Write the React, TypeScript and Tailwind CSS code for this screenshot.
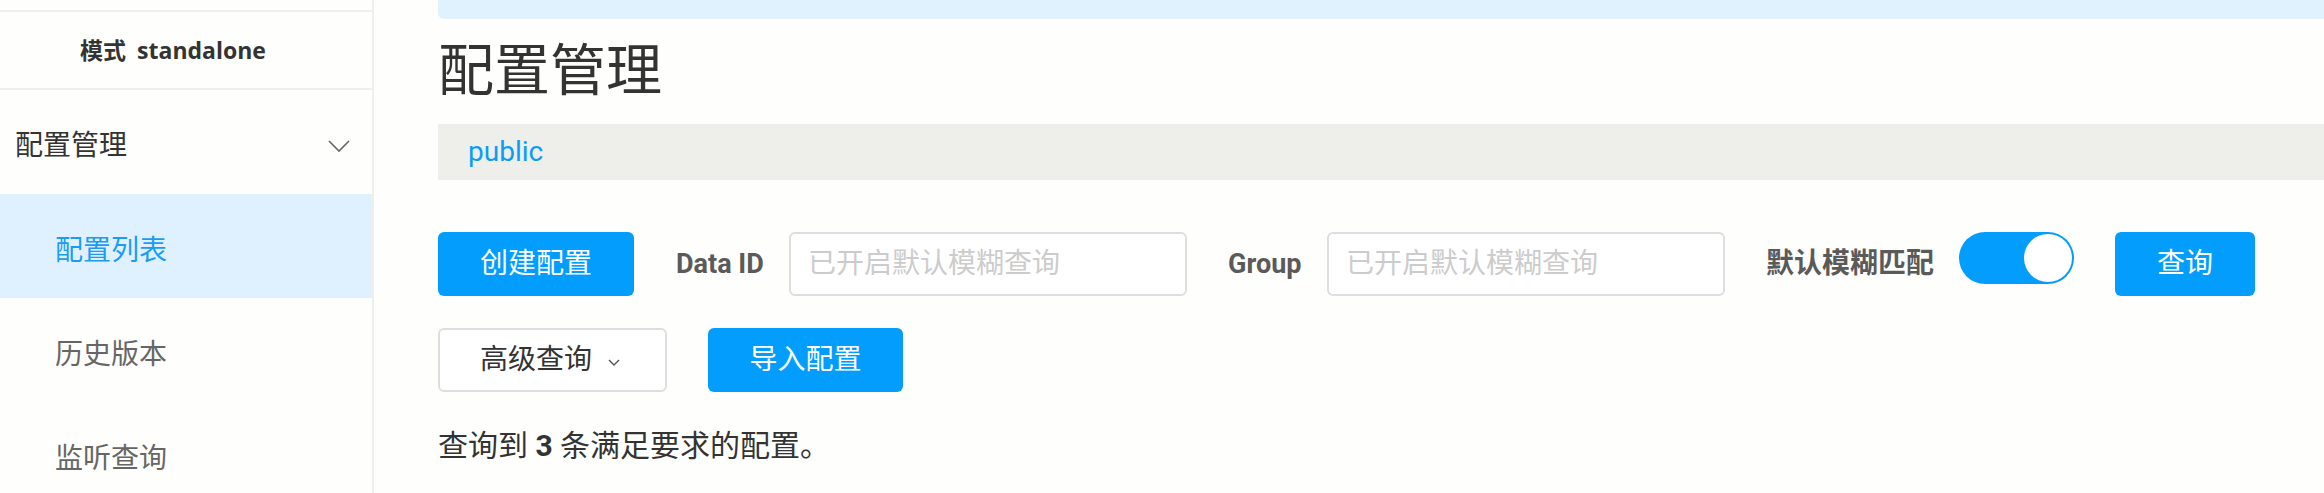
import { ReactNode } from "react";

const cjk = "font-['Roboto','Noto_Sans_CJK_SC',sans-serif]";

function BlueButton({ children, width }: { children: ReactNode; width: string }) {
  return (
    <button className={`${width} h-[64px] rounded-[6px] bg-[#039dfd] text-[28px] leading-none text-white flex items-center justify-center`}>
      {children}
    </button>
  );
}

function SearchField({ label, labelWidth }: { label: string; labelWidth: string }) {
  return (
    <div className="flex items-center mr-[41px]">
      <span className={`${labelWidth} mr-[26px] text-[27px] font-bold leading-none text-[#5a5a5a] whitespace-nowrap`}>{label}</span>
      <div className="w-[398px] h-[64px] rounded-[6px] border-2 border-[#dedede] bg-white flex items-center pl-[17px]">
        <span className="text-[28px] leading-none text-[#cccccc] whitespace-nowrap">已开启默认模糊查询</span>
      </div>
    </div>
  );
}

function Sidebar() {
  return (
    <aside className="w-[374px] shrink-0 border-r-2 border-[#efefed] flex flex-col">
      <div className="h-[12px] shrink-0 border-b-2 border-[#efefed]" />
      <div className="h-[78px] shrink-0 border-b-2 border-[#efefed] flex items-center justify-center pr-[26px] font-['Open_Sans','Noto_Sans_CJK_SC',sans-serif] text-[23px] font-bold text-[#333]">
        <span>模式</span>
        <span className="ml-[11px]">standalone</span>
      </div>
      <div className="h-[104px] shrink-0 flex items-center justify-between pl-[15px] pr-[22px] pt-[8px]">
        <span className="text-[28px] text-[#333]">配置管理</span>
        <svg width="22" height="13" viewBox="0 0 22 13" fill="none">
          <polyline points="1,1 11,11 21,1" stroke="#666" strokeWidth="1.6" />
        </svg>
      </div>
      <div className="h-[104px] shrink-0 flex items-center pl-[55px] pt-[9px] bg-[#dff1fe] text-[28px] text-[#1a9cf5]">配置列表</div>
      <div className="h-[104px] shrink-0 flex items-center pl-[55px] pt-[9px] text-[28px] text-[#666]">历史版本</div>
      <div className="h-[104px] shrink-0 flex items-center pl-[55px] pt-[9px] text-[28px] text-[#666]">监听查询</div>
    </aside>
  );
}

export default function App() {
  return (
    <div className={`h-[493px] w-[2324px] overflow-hidden flex bg-[#fefefc] ${cjk}`}>
      <Sidebar />
      <main className="flex-1 pl-[64px] flex flex-col">
        <div className="h-[19px] shrink-0 bg-[#dff2fe] rounded-bl-[6px]" />
        <div className="h-[105px] shrink-0 flex items-center">
          <h1 className="text-[56px] leading-none text-[#333] -mt-[2px]">配置管理</h1>
        </div>
        <div className="h-[56px] shrink-0 bg-[#eeefeb] flex items-center pl-[30px] text-[28px] text-[#0a9cf7]">public</div>

        <div className="mt-[52px] shrink-0 flex items-start">
          <div className="mr-[42px]">
            <BlueButton width="w-[196px]">创建配置</BlueButton>
          </div>
          <SearchField label="Data ID" labelWidth="w-[87px]" />
          <SearchField label="Group" labelWidth="w-[73px]" />
          <div className="h-[64px] flex items-center mr-[25px]">
            <span className="text-[28px] font-bold leading-none text-[#5a5a5a] whitespace-nowrap">默认模糊匹配</span>
          </div>
          <div className="w-[115px] h-[52px] rounded-full bg-[#039dfd] flex items-center justify-end pr-[2px] mr-[41px]">
            <div className="w-[48px] h-[48px] rounded-full bg-white" />
          </div>
          <BlueButton width="w-[140px]">查询</BlueButton>
        </div>

        <div className="mt-[32px] shrink-0 flex items-center">
          <button className="w-[229px] h-[64px] rounded-[6px] border-2 border-[#dedede] bg-white flex items-center pl-[40px] text-[28px] leading-none text-[#333]">
            <span>高级查询</span>
            <svg className="ml-[16px] mt-[6px]" width="12" height="8" viewBox="0 0 12 8" fill="none">
              <polyline points="1,1 6,6 11,1" stroke="#555" strokeWidth="1.4" />
            </svg>
          </button>
          <div className="ml-[41px]">
            <BlueButton width="w-[195px]">导入配置</BlueButton>
          </div>
        </div>

        <p className="mt-[33px] h-[42px] shrink-0 flex items-center text-[30px] leading-none text-[#333] whitespace-pre">
          查询到 <b className="font-bold">3</b> 条满足要求的配置。
        </p>
      </main>
    </div>
  );
}
